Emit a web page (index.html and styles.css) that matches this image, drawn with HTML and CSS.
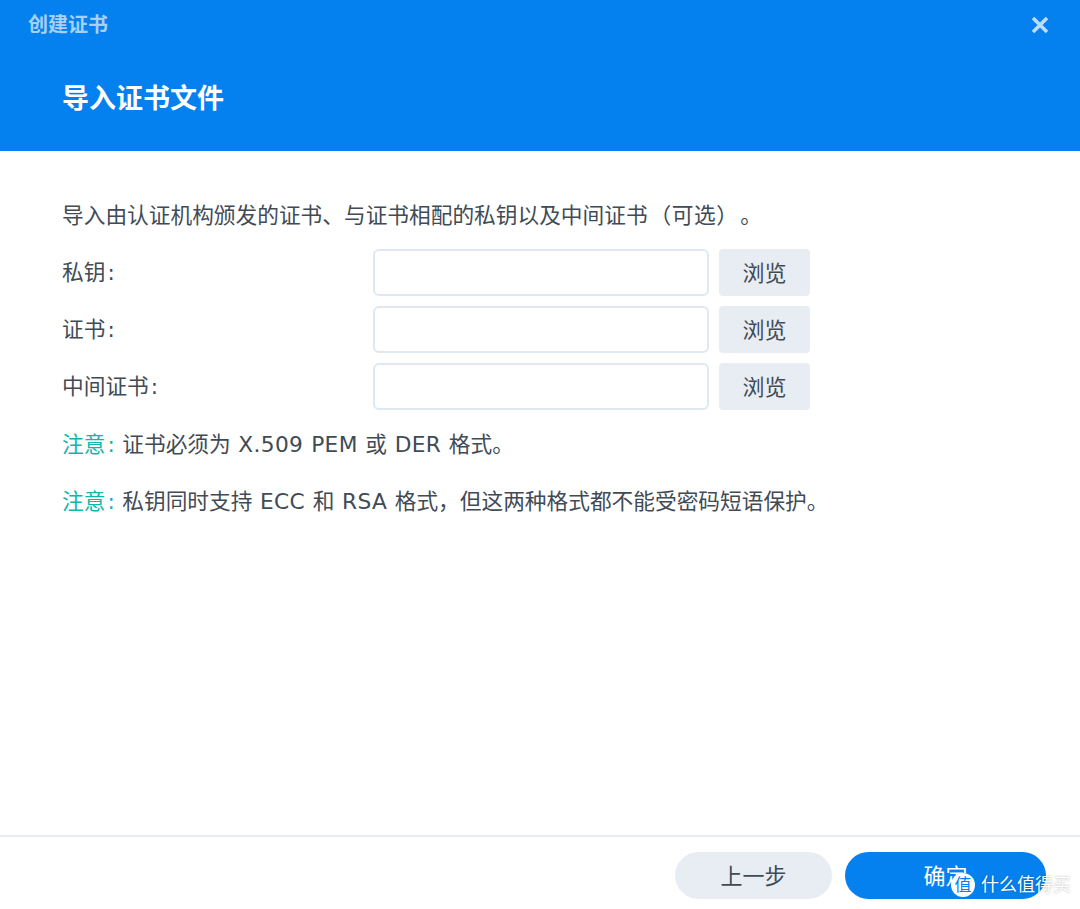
FILE: index.html
```html
<!DOCTYPE html>
<html lang="zh-CN">
<head>
    <meta charset="UTF-8">
    <meta name="viewport" content="width=device-width, initial-scale=1.0">
    <title>创建证书</title>
    <link rel="stylesheet" href="styles.css">
</head>
<body>
    <div class="dialog">
        <header class="dialog-header">
            <div class="window-bar">
                <span class="window-title">创建证书</span>
                <svg class="close-icon" width="20" height="20" viewBox="0 0 20 20" aria-hidden="true">
                    <path d="M3 3 L17 17 M17 3 L3 17" />
                </svg>
            </div>
            <h1>导入证书文件</h1>
        </header>

        <main class="dialog-body">
            <p class="intro">导入由认证机构颁发的证书、与证书相配的私钥以及中间证书<span class="paren">（可选）</span>。</p>

            <div class="file-row">
                <label for="key">私钥<span class="colon">:</span></label>
                <input type="text" id="key">
                <button class="browse">浏览</button>
            </div>
            <div class="file-row">
                <label for="cert">证书<span class="colon">:</span></label>
                <input type="text" id="cert">
                <button class="browse">浏览</button>
            </div>
            <div class="file-row">
                <label for="chain">中间证书<span class="colon">:</span></label>
                <input type="text" id="chain">
                <button class="browse">浏览</button>
            </div>

            <p class="note"><span class="note-tag">注意<span class="colon">:</span></span> 证书必须为 <span class="latin">X.509 PEM</span> 或 <span class="latin">DER</span> 格式。</p>
            <p class="note"><span class="note-tag">注意<span class="colon">:</span></span> 私钥同时支持 <span class="latin">ECC</span> 和 <span class="latin">RSA</span> 格式，但这两种格式都不能受密码短语保护。</p>
        </main>

        <footer class="dialog-footer">
            <button class="btn btn-back">上一步</button>
            <button class="btn btn-ok">确定</button>
        </footer>
    </div>

    <div class="watermark">
        <span class="watermark-badge">值</span>
        <span class="watermark-text">什么值得买</span>
    </div>
</body>
</html>
```

FILE: styles.css
```css
* {
    box-sizing: border-box;
}

body {
    margin: 0;
    padding: 0;
    background-color: #fff;
    color: #414b55;
    font-family: "DejaVu Sans", "Noto Sans CJK SC", sans-serif;
    font-size: 21.7px;
    word-spacing: 0.7px;
    text-spacing-trim: space-all;
}

.dialog {
    display: flex;
    flex-direction: column;
    height: 909px;
    overflow: hidden;
}

.dialog-header {
    height: 151px;
    background: #0580ef;
    color: #fff;
}

.window-bar {
    display: flex;
    justify-content: space-between;
    align-items: center;
    height: 50px;
    padding: 0 30px 0 28px;
}

.window-title {
    font-size: 20px;
    line-height: 50px;
    height: 50px;
    font-weight: bold;
    color: #a6d0f8;
}

.close-icon {
    fill: none;
    stroke: #bcdcfa;
    stroke-width: 3.6;
}

.dialog-header h1 {
    margin: 29px 0 0 62px;
    font-size: 27px;
    line-height: 40px;
    font-weight: bold;
}

.dialog-body {
    flex: 1;
    padding: 48px 62px 0;
}

.intro {
    margin: 0 0 16px;
    line-height: 34px;
}

.paren {
    margin-left: 2px;
    margin-right: 2px;
    letter-spacing: 0.5px;
}

.colon {
    margin-left: 2px;
}

.latin {
    letter-spacing: 0.35px;
}

.file-row {
    display: flex;
    align-items: center;
    height: 47px;
    margin-bottom: 10px;
}

.file-row label {
    width: 311px;
    padding-bottom: 4px;
}

.file-row input {
    width: 336px;
    height: 47px;
    border: 2px solid #dfe8f2;
    border-radius: 6px;
    background: #fff;
}

button {
    font-family: inherit;
    font-size: 22px;
    color: inherit;
    border: none;
    padding: 0 0 4px;
}

.browse {
    width: 91px;
    height: 47px;
    margin-left: 10px;
    border-radius: 4px;
    background: #e8edf4;
}

.note {
    margin: 0 0 23px;
    line-height: 34px;
}

.file-row + .note {
    margin-top: 18px;
}

.note-tag {
    color: #12b5ae;
}

.dialog-footer {
    display: flex;
    justify-content: flex-end;
    gap: 13px;
    height: 74px;
    padding: 15px 34px 0 0;
    border-top: 2px solid #e8edf4;
}

.btn {
    height: 47px;
    border-radius: 24px;
}

.btn-back {
    width: 157px;
    background: #e8edf4;
}

.btn-ok {
    width: 201px;
    background: #0580ef;
    color: #fff;
}

/* image watermark sitting over the corner of the shot */
.watermark {
    position: absolute;
    left: 951px;
    top: 871px;
    display: flex;
    align-items: center;
    gap: 6px;
    color: #fff;
}

.watermark-badge {
    width: 24px;
    height: 24px;
    border-radius: 50%;
    background: #fff;
    color: #0580ef;
    font-size: 17px;
    line-height: 24px;
    text-align: center;
}

.watermark-text {
    font-size: 18px;
    line-height: 28px;
    text-shadow: 0 0 2px rgba(0, 0, 0, 0.35);
}
```
